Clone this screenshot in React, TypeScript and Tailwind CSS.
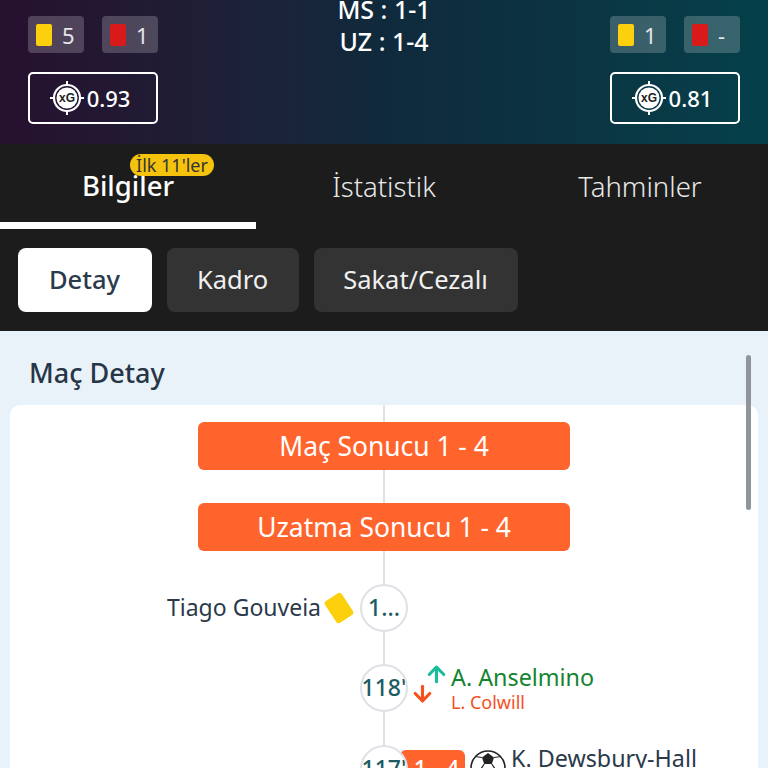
import { ArrowDown, ArrowUp } from "lucide-react";

type ChipProps = { color: string; value: string };

function CardChip({ color, value }: ChipProps) {
  return (
    <div className="flex h-[37px] w-[56px] items-center gap-[10px] rounded-[4px] bg-white/20 pl-[8px]">
      <span className={`h-[22px] w-[16px] rounded-[2px] ${color}`} />
      <span className="text-[22px] leading-none text-[#e4e6e8]">{value}</span>
    </div>
  );
}

function XgIcon() {
  return (
    <svg width="34" height="34" viewBox="0 0 34 34">
      <path d="M17 0v5M17 29v5M0 17h5M29 17h5" stroke="#fff" strokeWidth="2" />
      <circle cx="17" cy="17" r="13" fill="none" stroke="#fff" strokeWidth="2.2" />
      <circle cx="17" cy="17" r="10.5" fill="#fff" />
      <text x="17" y="21" textAnchor="middle" fontSize="12" fontWeight="700" fill="#222" fontFamily="Liberation Sans, sans-serif">
        xG
      </text>
    </svg>
  );
}

function XgBox({ value }: { value: string }) {
  return (
    <div className="flex h-[52px] w-[130px] items-center justify-center gap-[3px] rounded-[5px] border-2 border-white pr-[6px] text-[22px] font-medium text-white">
      <XgIcon />
      <span>{value}</span>
    </div>
  );
}

function SoccerBall() {
  return (
    <svg width="36" height="36" viewBox="0 0 36 36" className="shrink-0">
      <circle cx="18" cy="18" r="17" fill="#fff" stroke="#222" strokeWidth="1.6" />
      <path d="M18 3l6 4.5-2.2 6.5h-7.6L12 7.5z" fill="#222" />
      <path d="M24 7.5l7-1M12 7.5l-7-1M21.8 14l4 6M14.2 14l-4 6" stroke="#222" strokeWidth="1.2" fill="none" />
    </svg>
  );
}

function MinuteBubble({ label }: { label: string }) {
  return (
    <div className="z-10 flex h-[48px] w-[48px] shrink-0 items-center justify-center overflow-hidden rounded-full border-2 border-[#dfe1e6] bg-white pb-[2px] text-[23px] font-medium text-[#1d5c63]">
      {label}
    </div>
  );
}

export default function App() {
  return (
    <div className="h-[768px] w-[768px] overflow-hidden bg-[#e9f1f9] font-['Noto_Sans',sans-serif]">
      {/* skor alani */}
      <header className="flex h-[144px] items-start justify-between overflow-hidden bg-gradient-to-r from-[#26102f] via-[#0f2a3c] to-[#04404a] px-[28px] pt-[16px]">
        <div className="flex flex-col gap-[19px]">
          <div className="flex gap-[18px]">
            <CardChip color="bg-[#fdd00e]" value="5" />
            <CardChip color="bg-[#d91a1a]" value="1" />
          </div>
          <XgBox value="0.93" />
        </div>
        <div className="mt-[-23px] text-center text-[25px] leading-[32px] font-medium text-white">
          <div>MS : 1-1</div>
          <div>UZ : 1-4</div>
        </div>
        <div className="flex flex-col gap-[19px]">
          <div className="flex gap-[18px]">
            <CardChip color="bg-[#fdd00e]" value="1" />
            <CardChip color="bg-[#d91a1a]" value="-" />
          </div>
          <XgBox value="0.81" />
        </div>
      </header>

      {/* sekmeler */}
      <nav className="grid h-[85px] grid-cols-3 bg-[#1c1c1c] text-[27.5px] font-light text-[#e8e8e8]">
        <div className="relative flex items-center justify-center border-b-[7px] border-white pt-[6px] font-medium text-white">
          <span className="absolute top-[10px] left-[130px] flex h-[22px] w-[84px] items-center justify-center rounded-full bg-[#f5c30e] text-[18px] font-normal text-[#333]">
            İlk 11'ler
          </span>
          Bilgiler
        </div>
        <div className="flex items-center justify-center">İstatistik</div>
        <div className="flex items-center justify-center">Tahminler</div>
      </nav>

      <div className="flex h-[102px] items-start gap-[15px] bg-[#1c1c1c] pt-[19px] pl-[18px] text-[25.5px]">
        <button className="h-[64px] w-[134px] rounded-[8px] bg-white pr-[1px] pb-[2px] font-medium text-[#2b3a4a]">Detay</button>
        <button className="h-[64px] w-[132px] rounded-[8px] bg-[#333] pr-[1px] pb-[2px] text-[#f0f0f0]">Kadro</button>
        <button className="h-[64px] w-[204px] rounded-[8px] bg-[#333] pr-[1px] pb-[2px] text-[#f0f0f0]">Sakat/Cezalı</button>
      </div>

      {/* mac detay */}
      <section className="relative px-[10px]">
        <div className="absolute top-[24px] right-[17px] z-20 h-[155px] w-[5px] rounded-full bg-[#8f959b]" />
        <h2 className="flex h-[74px] items-center px-[19px] pt-[10px] text-[27px] font-medium text-[#263646]">Maç Detay</h2>
        <div className="relative h-[400px] rounded-[10px] bg-white pt-[17px]">
          <div className="absolute top-0 bottom-0 left-[373px] w-[2px] bg-[#dfe1e6]" />
          <div className="relative flex flex-col items-center gap-[33px]">
            <div className="flex h-[48px] w-[372px] items-center justify-center rounded-[6px] bg-[#ff642d] pt-[2px] text-[26.4px] text-white">Maç Sonucu 1 - 4</div>
            <div className="flex h-[48px] w-[372px] items-center justify-center rounded-[6px] bg-[#ff642d] pt-[2px] text-[26.4px] text-white">Uzatma Sonucu 1 - 4</div>
          </div>

          <div className="relative mt-[33px] flex flex-col gap-[32px]">
            <div className="grid h-[48px] grid-cols-[1fr_48px_1fr] grid-rows-[48px] items-center">
              <div className="flex items-center justify-end gap-[8px] pr-[11px] text-[23px] text-[#2b3a4a]">
                <span className="pb-[2px]">Tiago Gouveia</span>
                <span className="h-[26px] w-[20px] rotate-[-33deg] rounded-[3px] bg-[#fdd00e]" />
              </div>
              <MinuteBubble label="1..." />
              <div />
            </div>

            <div className="grid h-[48px] grid-cols-[1fr_48px_1fr] grid-rows-[48px] items-center">
              <div />
              <MinuteBubble label="118'" />
              <div className="flex items-center pl-[2px]">
                <div className="flex w-[41px] shrink-0">
                  <ArrowDown size={25} strokeWidth={3} className="mt-[10px] text-[#f4511e]" />
                  <ArrowUp size={25} strokeWidth={3} className="ml-[-11px] mt-[-9px] text-[#1abc9c]" />
                </div>
                <div className="flex flex-col">
                  <span className="text-[23.3px] leading-[28px] text-[#14842f]">A. Anselmino</span>
                  <span className="text-[18px] leading-[22px] text-[#f4511e]">L. Colwill</span>
                </div>
              </div>
            </div>

            <div className="mt-[1px] grid grid-cols-[1fr_48px_1fr] items-start">
              <div />
              <MinuteBubble label="117'" />
              <div className="flex items-start">
                <div className="ml-[-8px] mt-[5px] flex h-[48px] w-[65px] items-start justify-center rounded-[6px] bg-[#ff642d] pl-[8px] pt-[1px] text-[23px] font-medium text-white">1 - 4</div>
                <div className="ml-[5px] mt-[5px]">
                  <SoccerBall />
                </div>
                <span className="ml-[5px] mt-[-1px] text-[23.3px] leading-[28px] whitespace-nowrap text-[#2b3a4a]">K. Dewsbury-Hall</span>
              </div>
            </div>
          </div>
        </div>
      </section>
    </div>
  );
}
